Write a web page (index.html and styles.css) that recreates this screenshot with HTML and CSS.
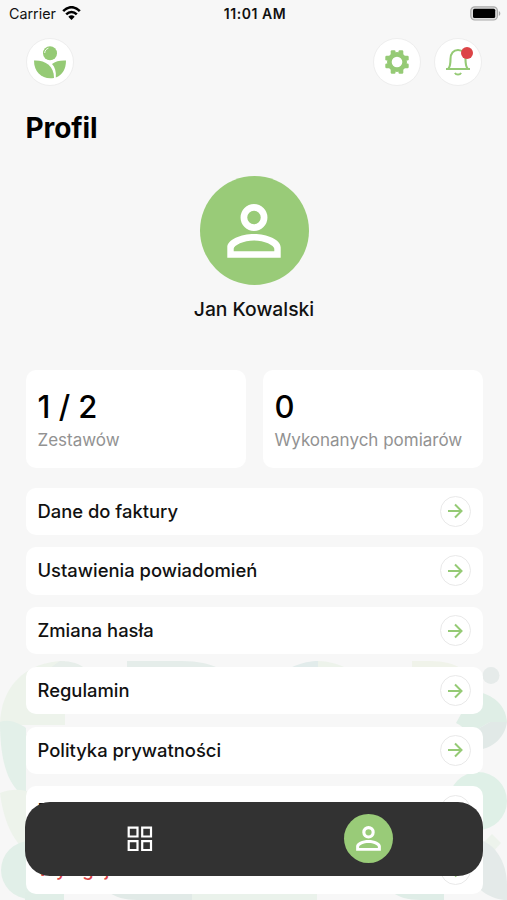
FILE: index.html
```html
<!DOCTYPE html>
<html lang="pl">
<head>
    <meta charset="UTF-8">
    <meta name="viewport" content="width=device-width, initial-scale=1.0">
    <title>Profil</title>
    <link rel="stylesheet" href="styles.css">
</head>
<body>
    <!-- Shared icons -->
    <svg class="sprite" aria-hidden="true">
        <symbol id="arrow" viewBox="0 0 16 16">
            <path d="M1 8h13.500M8 1.500L14.500 8 8 14.500" fill="none" stroke="#95ca75" stroke-width="2"/>
        </symbol>
        <symbol id="person" viewBox="0 0 54 54">
            <circle cx="27" cy="13.500" r="10.100" fill="none" stroke="#fff" stroke-width="6.700"/>
            <path d="M.3 53.700V43.500C.3 35.500 14 30 27 30s26.700 5.500 26.700 13.500v10.200zM6.700 47.300h40.600v-2.500c0-3.500-10-8.300-20.300-8.300S6.700 41.300 6.700 44.800z" fill="#fff" fill-rule="evenodd"/>
        </symbol>
    </svg>

    <div class="screen">
        <svg class="pattern" viewBox="0 0 507 240" aria-hidden="true">
            <path d="M65 1C25 1 0 28 0 65h65z" fill="#edf3eb"/>
            <path d="M60 1c12 0 20 3 24 7H50z" fill="#e7eeea"/>
            <path d="M127 1h55c16 0 28 3 36 7h-91z" fill="#e5edea"/>
            <path d="M290 8c12-6 22-7 28-7v7z" fill="#e2eceb"/>
            <path d="M318 1c10 0 20 3 28 7h-28z" fill="#edf3eb"/>
            <path d="M412 1h18c14 0 24 3 30 7h-48z" fill="#f0f3ea"/>
            <path d="M0 62c8-3 17 0 26 6v65h-6C8 122 0 102 0 62z" fill="#e3f0e9"/>
            <path d="M0 133c10-4 18-4 26-2h38v60H26C12 180 3 158 0 133z" fill="#edf3eb"/>
            <path d="M64 130h64v22H64z" fill="#e3eee8"/>
            <path d="M26 74h52v14H26z" fill="#f0f3ef"/>
            <path d="M78 74h18v8z" fill="#e5ebea"/>
            <path d="M96 81h34c-4 3-6 5-8 7H78c4-5 8-7 18-7z" fill="#e5ecea"/>
            <path d="M130 80h60c24 0 32 3 36 8H122c2-4 4-6 8-8z" fill="#eaf1eb"/>
            <path d="M162 73h155v7H200c-16 0-30-2-38-7z" fill="#e0ece7"/>
            <path d="M317 73h64v9h-64z" fill="#edf2eb"/>
            <path d="M290 88c20-9 90-9 120 0z" fill="#e6eeea"/>
            <path d="M140 147c6-9 32-9 40 0z" fill="#e0eee9"/>
            <path d="M192 140h62v7h-62z" fill="#e1eee8"/>
            <path d="M165 133h180c-14 5-40 7-90 7h-60z" fill="#f0f3eb"/>
            <path d="M356 147c8-5 18-6 26-6v6z" fill="#e0efe8"/>
            <path d="M382 135h62v12h-62z" fill="#eaf2e9"/>
            <path d="M444 133h42v14h-42z" fill="#e0efe8"/>
            <circle cx="491" cy="15.500" r="8.500" fill="#e6ebea"/>
            <path d="M474 31c19 3 32 14 33 31h-17l-33 19c-3-4 0-5 2-6 8-3 8-6-3-12z" fill="#dfeee6"/>
            <path d="M457 81l33-19h17c-2 15-14 26-29 28-10 0-18-4-21-9z" fill="#e1e9e7"/>
            <circle cx="478" cy="141" r="29" fill="#dff0e7"/>
            <path d="M492 174l9 9-9 10-10-9z" fill="#edf3ec"/>
            <path d="M472 179c22 0 35 23 35 46v15c-15 0-32-10-35-24z" fill="#e4eae9"/>
            <circle cx="30" cy="210" r="29" fill="#e1efe8"/>
            <path d="M25 232h39v8H25z" fill="#e0eee7"/>
            <path d="M108 232h84v8h-55c-12 0-22-3-29-8z" fill="#e1eae7"/>
            <path d="M192 232h125v8H192z" fill="#eaf2eb"/>
            <path d="M392 232h52v8h-24c-12 0-22-3-28-8z" fill="#dfede7"/>
        </svg>

        <div class="status-bar">
            <div class="carrier">
                <span>Carrier</span>
                <svg width="19" height="15" viewBox="0 0 19 15">
                    <path d="M1.200 5.200C6-.2 13-.2 17.800 5.200M4.200 8.400c3.200-3.300 7.400-3.300 10.600 0" fill="none" stroke="#000" stroke-width="2.500"/>
                    <path d="M6.300 10.700c2-1.800 4.400-1.800 6.400 0L9.500 14z"/>
                </svg>
            </div>
            <div class="time">11:01 AM</div>
            <svg class="battery" width="31" height="15" viewBox="0 0 31 15">
                <rect x=".8" y=".8" width="26.600" height="13.200" rx="4" fill="#dedede" stroke="#aaa" stroke-width="1.200"/>
                <rect x="3" y="2.800" width="22.200" height="9.300" rx="1.500"/>
                <path d="M28.800 5c2 .8 2 4.200 0 5z" fill="#aaa"/>
            </svg>
        </div>

        <header>
            <div class="round-button">
                <svg width="34" height="34" viewBox="0 0 34 34">
                    <circle cx="17" cy="8.200" r="7" fill="#95ca75"/>
                    <path d="M11.700 8c.2-2.500 1.500-4 3.700-4.800" fill="none" stroke="#fff" stroke-width=".9"/>
                    <path d="M1 15.500c11-.5 20 5 20 17.500C10 35 1 28 1 15.500z" fill="#95ca75"/>
                    <path d="M33 15.500c-6-.3-10.500.8-14 3.500 3 3 4.300 7.500 3.800 13.500C29.500 30 33 24 33 15.500z" fill="#95ca75"/>
                </svg>
            </div>
            <div class="header-actions">
                <div class="round-button">
                    <svg width="24" height="24" viewBox="0 0 24 24">
                        <g fill="#95ca75">
                            <circle cx="12" cy="12" r="10"/>
                            <rect x="5.700" y=".3" width="4.800" height="23.400" rx="1.200"/>
                            <rect x="13.500" y=".3" width="4.800" height="23.400" rx="1.200"/>
                            <rect x=".3" y="5.700" width="23.400" height="4.800" rx="1.200"/>
                            <rect x=".3" y="13.500" width="23.400" height="4.800" rx="1.200"/>
                        </g>
                        <circle cx="12" cy="12" r="5.300" fill="#fff"/>
                    </svg>
                </div>
                <div class="round-button">
                    <svg width="26" height="28" viewBox="0 0 26 28">
                        <path d="M1 21h24M3.500 20.500C5.500 18 5.500 16 5.500 11 5.500 5.500 8.500 2 13 2s7.500 3.500 7.500 9c0 5 0 7 2 9.500" fill="none" stroke="#95ca75" stroke-width="2.100"/>
                        <path d="M10 24.800c1 2.400 5 2.400 6 0" fill="none" stroke="#95ca75" stroke-width="2"/>
                    </svg>
                    <span class="badge"></span>
                </div>
            </div>
        </header>

        <main>
            <h1>Profil</h1>

            <section class="user">
                <div class="avatar"><svg width="54" height="54"><use href="#person"/></svg></div>
                <p>Jan Kowalski</p>
            </section>

            <section class="stats">
                <div class="stat">
                    <strong>1 / 2</strong>
                    <span>Zestawów</span>
                </div>
                <div class="stat">
                    <strong>0</strong>
                    <span>Wykonanych pomiarów</span>
                </div>
            </section>

            <section class="menu">
                <div class="menu-item">Dane do faktury<span class="go"><svg width="16" height="16"><use href="#arrow"/></svg></span></div>
                <div class="menu-item">Ustawienia powiadomień<span class="go"><svg width="16" height="16"><use href="#arrow"/></svg></span></div>
                <div class="menu-item">Zmiana hasła<span class="go"><svg width="16" height="16"><use href="#arrow"/></svg></span></div>
                <div class="menu-item">Regulamin<span class="go"><svg width="16" height="16"><use href="#arrow"/></svg></span></div>
                <div class="menu-item">Polityka prywatności<span class="go"><svg width="16" height="16"><use href="#arrow"/></svg></span></div>
                <div class="menu-item">FAQ<span class="go"><svg width="16" height="16"><use href="#arrow"/></svg></span></div>
                <div class="menu-item logout">Wyloguj<span class="go"><svg width="16" height="16"><use href="#arrow"/></svg></span></div>
            </section>
        </main>

        <nav>
            <div class="tab">
                <svg width="26" height="26" viewBox="0 0 26 26" fill="none" stroke="#fff" stroke-width="2.200">
                    <path d="M1.700 1.700h8.800v8.800H1.700zM15.200 1.700H24v8.800h-8.800zM1.700 15.200h8.800V24H1.700zM15.200 15.200H24V24h-8.800z"/>
                </svg>
            </div>
            <div class="tab">
                <div class="tab-active"><svg width="25" height="25"><use href="#person"/></svg></div>
            </div>
        </nav>
    </div>
</body>
</html>
```
FILE: styles.css
```css
/* Global Styles */
* {
    box-sizing: border-box;
}

body {
    margin: 0;
    font-family: Inter, 'Liberation Sans', sans-serif;
    background-color: #f7f7f7;
    color: #111;
}

svg {
    display: block;
}

.sprite {
    position: absolute;
    width: 0;
    height: 0;
}

.screen {
    position: relative;
    height: 900px;
    overflow: hidden;
}

.pattern {
    position: absolute;
    left: 0;
    bottom: 0;
    width: 507px;
    height: 240px;
}

/* Status bar */
.status-bar {
    display: grid;
    grid-template-columns: 1fr auto 1fr;
    align-items: center;
    height: 27px;
    padding: 0 6px 0 9px;
    font-size: 14.3px;
}

.carrier {
    display: flex;
    align-items: center;
    gap: 6px;
}

.time {
    font-size: 14px;
    font-weight: 600;
    letter-spacing: 0.55px;
}

.battery {
    justify-self: end;
}

/* Header */
header {
    display: flex;
    justify-content: space-between;
    padding: 11px 25px 0 26px;
}

.header-actions {
    display: flex;
    gap: 13px;
}

.round-button {
    position: relative;
    display: flex;
    align-items: center;
    justify-content: center;
    width: 48px;
    height: 48px;
    background: #fff;
    border: 1px solid #eee;
    border-radius: 50%;
}

.badge {
    position: absolute;
    top: 8px;
    right: 8px;
    width: 12px;
    height: 12px;
    background: #dc4447;
    border-radius: 50%;
}

/* Profile */
main {
    position: relative;
    padding: 25px 24.5px 0 25.5px;
}

h1 {
    margin: 0;
    font-size: 28px;
    line-height: 34px;
    font-weight: 700;
    letter-spacing: -0.1px;
    color: #000;
}

.user {
    display: flex;
    flex-direction: column;
    align-items: center;
    margin-top: 31px;
}

.avatar {
    display: flex;
    align-items: center;
    justify-content: center;
    width: 109px;
    height: 109px;
    background: #99cb78;
    border-radius: 50%;
}

.user p {
    margin: 12px 0 0;
    font-size: 19.3px;
    line-height: 24px;
    font-weight: 450;
}

/* Stats */
.stats {
    display: grid;
    grid-template-columns: 1fr 1fr;
    gap: 17px;
    margin-top: 49px;
}

.stat {
    display: flex;
    flex-direction: column;
    height: 98px;
    padding: 18px 12px;
    background: #fff;
    border-radius: 10px;
}

.stat strong {
    font-size: 31px;
    line-height: 38px;
    font-weight: 450;
    color: #000;
}

.stat span {
    margin-top: 3px;
    font-size: 17px;
    line-height: 22px;
    color: #929292;
    white-space: nowrap;
}

/* Menu */
.menu {
    display: flex;
    flex-direction: column;
    gap: 12.4px;
    margin-top: 19.5px;
}

.menu-item {
    display: flex;
    align-items: center;
    justify-content: space-between;
    height: 47.4px;
    padding: 0 12px 1px;
    font-size: 18.4px;
    font-weight: 470;
    background: #fff;
    border-radius: 10px;
}

.go {
    display: flex;
    align-items: center;
    justify-content: center;
    width: 31px;
    height: 31px;
    margin-top: 1px;
    border: 1px solid #e9e9e9;
    border-radius: 50%;
}

.logout {
    color: #dc4447;
}

/* Bottom navigation */
nav {
    position: absolute;
    left: 25px;
    right: 24px;
    bottom: 24.5px;
    display: grid;
    grid-template-columns: 1fr 1fr;
    height: 73.5px;
    background: #323232;
    border-radius: 25px;
}

.tab {
    display: flex;
    align-items: center;
    justify-content: center;
}

.tab-active {
    display: flex;
    align-items: center;
    justify-content: center;
    width: 49px;
    height: 49px;
    background: #99cb78;
    border-radius: 50%;
}
```
